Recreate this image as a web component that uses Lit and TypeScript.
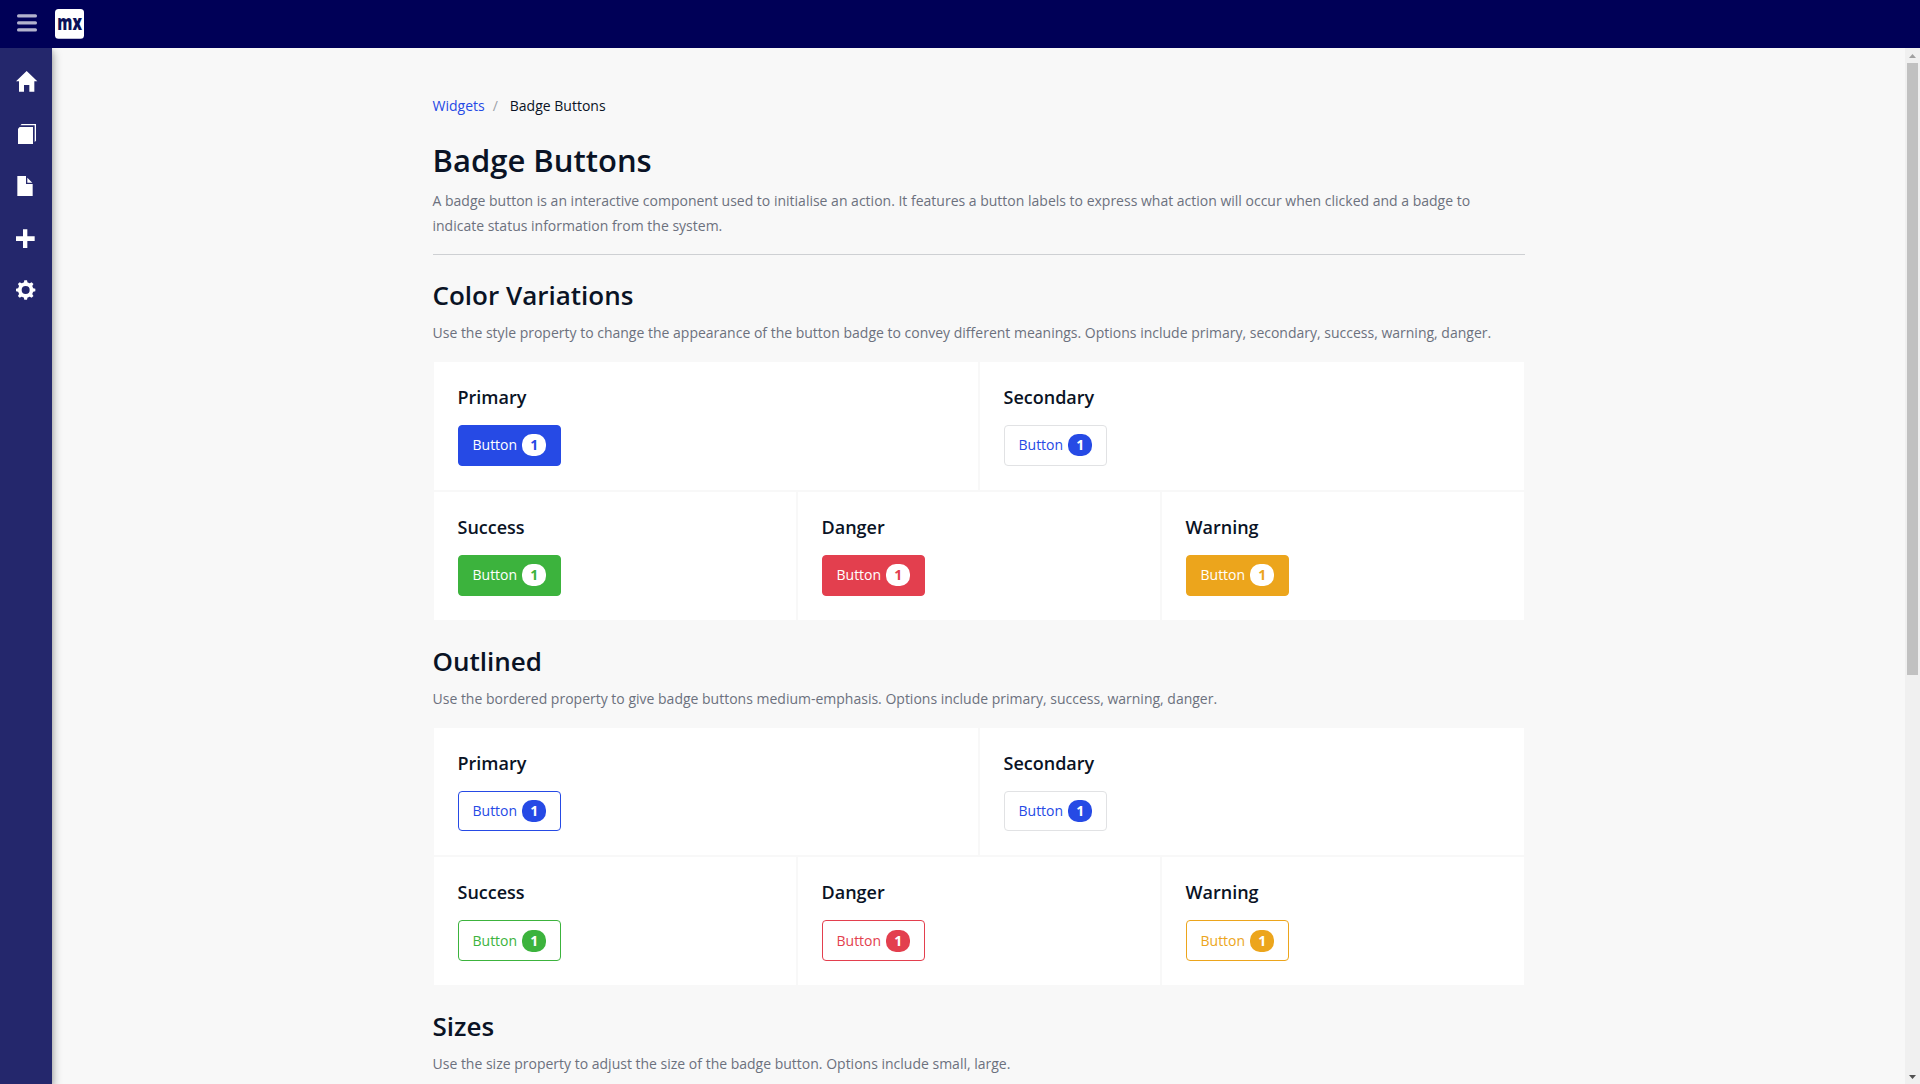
import { LitElement, html, css, svg } from "lit";
import { customElement } from "lit/decorators.js";

interface Variant {
  label: string;
  tone: string;
}

const TOP_ROW: Variant[] = [
  { label: "Primary", tone: "primary" },
  { label: "Secondary", tone: "secondary" },
];
const BOTTOM_ROW: Variant[] = [
  { label: "Success", tone: "success" },
  { label: "Danger", tone: "danger" },
  { label: "Warning", tone: "warning" },
];

// Eight teeth around a ring with an open centre.
const TEETH = [0, 45, 90, 135, 180, 225, 270, 315];

const ICONS = [
  svg`<path d="M80 45L112 76H103V107H88V87H72V107H57V76H48Z"/>`,
  svg`<path d="M59 57H99V108H54V62Z"/><path d="M65 48H108V98L104 102V52H61Z"/>`,
  svg`<path d="M52 48H78V72H98V108H52Z"/><path d="M82 53L97 68H82Z"/>`,
  svg`<path d="M69 52H82V73H104V87H82V108H69V87H48V73H69Z"/>`,
  svg`<circle cx="77" cy="78" r="17.5" fill="none" stroke="#fff" stroke-width="11"/>
    ${TEETH.map((a) => svg`<path d="M71 58L73 49H81L83 58Z" transform=${`rotate(${a} 77 78)`}/>`)}`,
];

@customElement("app-root")
export class AppRoot extends LitElement {
  static styles = css`
    :host {
      display: flex;
      flex-direction: column;
      height: 1084px;
      overflow: hidden;
      background: #f8f8f8;
      font: 14px/20px "Open Sans", sans-serif;
      color: #0a1325;
    }
    * { box-sizing: border-box; }
    .topbar {
      flex: none;
      height: 48px;
      background: #000057;
      display: flex;
      align-items: center;
      z-index: 2;
      position: relative;
    }
    .topbar svg { display: block; }
    .body { flex: 1; min-height: 0; display: flex; }
    .sidebar {
      flex: none;
      width: 52px;
      padding-top: 8px;
      background: #24276c;
      box-shadow: 0 0 4px rgba(0, 0, 0, 0.14), 2px 4px 8px rgba(0, 0, 0, 0.28);
      z-index: 1;
    }
    .sidebar svg { display: block; fill: #fff; }
    .page { flex: 1; min-width: 0; overflow: hidden; }
    .container { width: 1092px; margin: 0 auto; }
    .crumbs { display: flex; padding-top: 48px; }
    .crumbs a { color: #264ae5; }
    .crumbs i { font-style: normal; color: #9da1a8; padding: 0 12px 0 8px; }
    h1, h2, h4, p { margin: 0; }
    h1, h2, h4 { font-weight: 600; }
    h1 { font-size: 31px; line-height: 42px; margin-top: 23px; }
    p { color: #6c717e; }
    .lead { line-height: 25px; padding: 7px 48px 16px 0; border-bottom: 1px solid #ced0d3; }
    h2 { font-size: 26px; line-height: 36px; padding-top: 22px; }
    .note { line-height: 25px; padding-top: 7px; height: 48.1px; }
    .grid { display: grid; grid-template-columns: repeat(6, 1fr); }
    .card {
      height: 129.75px;
      background: #fff;
      border: 1px solid #f8f8f8;
      padding: 23px 24px 24px;
      grid-column: span 2;
    }
    .wide { grid-column: span 3; }
    h4 { font-size: 18px; line-height: 24px; margin-bottom: 16px; }
    .btn {
      --tone: #264ae5;
      display: flex;
      align-items: center;
      gap: 5px;
      width: 103px;
      height: 40.75px;
      margin: 0;
      padding: 0 14px;
      font: inherit;
      border: 1px solid var(--tone);
      border-radius: 4px;
      background: var(--tone);
      color: #fff;
    }
    .label { line-height: 19px; margin-bottom: 1px; }
    .badge {
      width: 24px;
      height: 22px;
      padding-left: 1px;
      border-radius: 10px;
      background: #fff;
      color: var(--tone);
      font-weight: 700;
      line-height: 21px;
      text-align: center;
    }
    .success { --tone: #3cb33d; }
    .danger { --tone: #e33f4e; }
    .warning { --tone: #eca51c; }
    .outlined, .secondary { background: #fff; color: var(--tone); }
    .outlined .badge, .secondary .badge { background: var(--tone); color: #fff; }
    .secondary { border-color: #e1e2e4; }
    .scroll {
      flex: none;
      width: 15px;
      background: #f0f0f0;
      display: flex;
      flex-direction: column;
      align-items: center;
    }
    .scroll svg { display: block; flex: none; }
    .thumb { width: 11px; height: 612px; background: #c1c1c1; }
    .rest { flex: 1; }
  `;

  private button(v: Variant, outlined: boolean) {
    return html`<button class="btn ${v.tone} ${outlined ? "outlined" : ""}">
      <span class="label">Button</span><span class="badge">1</span>
    </button>`;
  }

  private card(v: Variant, outlined: boolean, wide: boolean) {
    return html`<div class="card ${wide ? "wide" : ""}">
      <h4>${v.label}</h4>
      ${this.button(v, outlined)}
    </div>`;
  }

  private section(title: string, note: string, outlined = false) {
    return html`<section>
      <h2>${title}</h2>
      <p class="note">${note}</p>
      <div class="grid">
        ${TOP_ROW.map((v) => this.card(v, outlined, true))}
        ${BOTTOM_ROW.map((v) => this.card(v, outlined, false))}
      </div>
    </section>`;
  }

  render() {
    return html`
      <header class="topbar">
        <svg width="96" height="48" viewBox="0 0 96 48">
          <g fill="#b2b2cd">
            <rect x="17" y="14.2" width="20" height="3.2" rx="1.5" />
            <rect x="17" y="21.3" width="20" height="3.2" rx="1.5" />
            <rect x="17" y="28.3" width="20" height="3.2" rx="1.5" />
          </g>
          <rect x="55" y="9" width="29" height="29.8" rx="3.5" fill="#fff" />
          <text transform="translate(57.3 29.7) scale(.74 1)" font-family="Open Sans" font-weight="800" font-size="20.5" fill="#0a1058">mx</text>
        </svg>
      </header>
      <div class="body">
        <nav class="sidebar">
          ${ICONS.map((icon) => html`<svg width="52" height="52" viewBox="0 0 156 156">${icon}</svg>`)}
        </nav>
        <main class="page">
          <div class="container">
            <div class="crumbs"><a>Widgets</a><i>/</i><span>Badge Buttons</span></div>
            <h1>Badge Buttons</h1>
            <p class="lead">
              A badge button is an interactive component used to initialise an action. It features a button labels to
              express what action will occur when clicked and a badge to indicate status information from the system.
            </p>
            ${this.section(
              "Color Variations",
              "Use the style property to change the appearance of the button badge to convey different meanings. Options include primary, secondary, success, warning, danger."
            )}
            ${this.section(
              "Outlined",
              "Use the bordered property to give badge buttons medium-emphasis. Options include primary, success, warning, danger.",
              true
            )}
            <h2>Sizes</h2>
            <p class="note">Use the size property to adjust the size of the badge button. Options include small, large.</p>
          </div>
        </main>
        <div class="scroll">
          <svg width="15" height="15" viewBox="0 0 15 15"><path d="M4 10L7.5 6L11 10Z" fill="#a0a0a0" /></svg>
          <div class="thumb"></div>
          <div class="rest"></div>
          <svg width="15" height="15" viewBox="0 0 15 15"><path d="M4 6L7.5 10L11 6Z" fill="#505050" /></svg>
        </div>
      </div>
    `;
  }
}
